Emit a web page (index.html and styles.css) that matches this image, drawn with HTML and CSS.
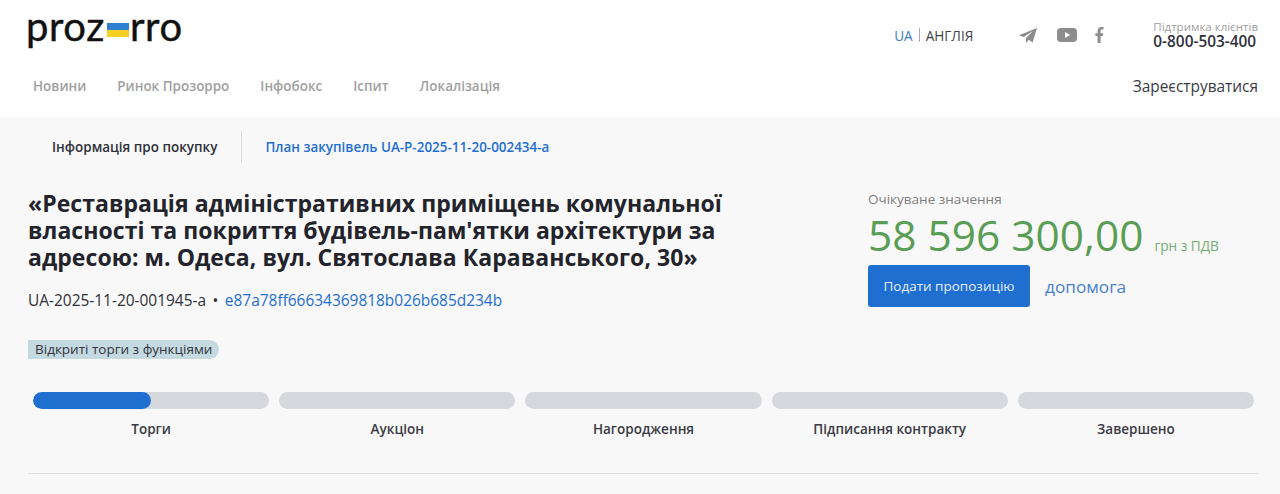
FILE: index.html
```html
<!DOCTYPE html>
<html lang="uk">
<head>
    <meta charset="UTF-8">
    <title>Prozorro</title>
    <link rel="stylesheet" href="styles.css">
</head>
<body>
    <header class="header">
        <div class="header-top">
            <a class="logo">proz<span class="logo-flag"></span>rro</a>
            <div class="header-right">
                <div class="lang"><span class="lang-active">UA</span><span class="lang-sep"></span><span>АНГЛІЯ</span></div>
                <div class="socials">
                    <svg class="icon-telegram" width="18" height="15" viewBox="0 0 18 15"><path d="M18 0 L0 7.2 L4.6 9 L14 3 L7 10 L7 15 L9.8 11.8 L13.6 14.6 Z" fill="#8c8c8c"/></svg>
                    <svg class="icon-youtube" width="20" height="14" viewBox="0 0 20 14"><rect width="20" height="14" rx="4" fill="#8c8c8c"/><path d="M8 4 L13.2 7 L8 10 Z" fill="#fff"/></svg>
                    <svg class="icon-facebook" width="9" height="16" viewBox="0 0 9 16"><path d="M2.6 16 V9 H0.4 V6.2 H2.6 V4 C2.6 1.4 4.1 0 6.3 0 C7.3 0 8.2 .1 8.5 .1 V2.6 H7 C5.8 2.6 5.6 3.2 5.6 4 V6.2 H8.3 L7.9 9 H5.6 V16 Z" fill="#8c8c8c"/></svg>
                </div>
                <div class="support">
                    <div class="support-label">Підтримка клієнтів</div>
                    <div class="support-phone">0-800-503-400</div>
                </div>
            </div>
        </div>
        <div class="header-nav">
            <nav class="nav">
                <a>Новини</a>
                <a>Ринок Прозорро</a>
                <a>Інфобокс</a>
                <a>Іспит</a>
                <a>Локалізація</a>
            </nav>
            <a class="register">Зареєструватися</a>
        </div>
    </header>

    <main class="main">
        <div class="tabs">
            <div class="tab tab-active">Інформація про покупку</div>
            <div class="tab tab-link">План закупівель UA-P-2025-11-20-002434-a</div>
        </div>

        <div class="tender">
            <div class="tender-info">
                <h1 class="tender-title">«Реставрація адміністративних приміщень комунальної власності та покриття будівель-пам'ятки архітектури за адресою: м. Одеса, вул. Святослава Караванського, 30»</h1>
                <div class="tender-ids">UA-2025-11-20-001945-a<span class="dot">•</span><a>e87a78ff66634369818b026b685d234b</a></div>
                <span class="tag">Відкриті торги з функціями</span>
            </div>
            <div class="tender-side">
                <div class="price-label">Очікуване значення</div>
                <div class="price"><span class="price-value">58 596 300,00</span><span class="price-tax">грн з ПДВ</span></div>
                <div class="actions">
                    <button class="submit-btn">Подати пропозицію</button>
                    <a class="help">допомога</a>
                </div>
            </div>
        </div>

        <div class="stages">
            <div class="stage">
                <div class="stage-bar"><div class="stage-fill"></div></div>
                <div class="stage-name">Торги</div>
            </div>
            <div class="stage">
                <div class="stage-bar"></div>
                <div class="stage-name">Аукціон</div>
            </div>
            <div class="stage">
                <div class="stage-bar"></div>
                <div class="stage-name">Нагородження</div>
            </div>
            <div class="stage">
                <div class="stage-bar"></div>
                <div class="stage-name">Підписання контракту</div>
            </div>
            <div class="stage">
                <div class="stage-bar"></div>
                <div class="stage-name">Завершено</div>
            </div>
        </div>
        <div class="divider"></div>
    </main>
</body>
</html>
```

FILE: styles.css
```css
body {
    margin: 0;
    height: 494px;
    overflow: hidden;
    font-family: "Open Sans", "Noto Sans", sans-serif;
    background-color: #f8f8f8;
    color: #2f3039;
}
.header {
    background-color: #fff;
    height: 117px;
    box-sizing: border-box;
    padding: 0 22px 0 28px;
}
.header-top {
    display: flex;
    justify-content: space-between;
    height: 66px;
}
.logo {
    font-family: "Lato", sans-serif;
    font-size: 40px;
    line-height: 30px;
    letter-spacing: 0.6px;
    color: #111;
    -webkit-text-stroke: 0.4px #111;
    margin-left: -2px;
    padding-top: 11px;
    display: flex;
    align-items: baseline;
    height: 30px;
}
.logo-flag {
    display: inline-block;
    width: 22px;
    height: 14px;
    margin: 0 1px 0 2px;
    background: linear-gradient(#2e7fd0 50%, #f7cf25 50%);
    transform: translateY(-4px);
}
.header-right {
    display: flex;
    align-items: center;
    height: 68px;
}
.lang {
    display: flex;
    align-items: center;
    font-size: 13.6px;
    color: #3d3f48;
    margin-right: 46px;
    padding-top: 2px;
}
.lang-active {
    color: #3b78c4;
}
.lang-sep {
    width: 1px;
    height: 14px;
    background-color: #aaa;
    margin: 0 6px;
}
.socials {
    display: flex;
    align-items: center;
    margin-right: 49px;
    padding-top: 2px;
}
.icon-telegram {
    margin-right: 20px;
}
.icon-youtube {
    margin-right: 18px;
}
.support-label {
    font-size: 11.5px;
    line-height: 14px;
    color: #a0a0a0;
}
.support-phone {
    font-size: 15.4px;
    font-weight: 600;
    line-height: 15px;
    color: #2f3039;
}
.header-nav {
    display: flex;
    justify-content: space-between;
    align-items: center;
    height: 40px;
}
.nav {
    display: flex;
    gap: 31px;
    padding-left: 5px;
    font-size: 13.45px;
    font-weight: 600;
    color: #9f9f9f;
}
.register {
    font-size: 15.4px;
    color: #3a3c45;
}
.main {
    padding: 0 22px 0 28px;
}
.tabs {
    display: flex;
    height: 32px;
    padding-top: 14px;
    font-size: 13.45px;
    font-weight: 600;
    align-items: center;
}
.tab {
    line-height: 32px;
}
.tab-active {
    padding: 0 24px;
    border-right: 1px solid #d5dde3;
}
.tab-link {
    padding-left: 23px;
    color: #1f6fd1;
}
.tender {
    display: flex;
    margin-top: 27px;
}
.tender-info {
    width: 840px;
}
.tender-title {
    margin: 0;
    width: 730px;
    font-size: 23px;
    line-height: 27px;
    font-weight: 700;
    letter-spacing: 0.05px;
    color: #22232b;
}
.tender-ids {
    margin-top: 18px;
    font-size: 15.45px;
    line-height: 22px;
}
.tender-ids a {
    color: #1f6fd1;
}
.dot {
    margin: 0 6.5px;
}
.tag {
    display: inline-block;
    margin-top: 29px;
    padding: 0 7px;
    font-size: 13.5px;
    line-height: 19px;
    background-color: #c5d9e1;
    border-radius: 0 10px 10px 0;
    color: #33343c;
}
.price-label {
    margin: -1px 0 1px;
    font-size: 13.5px;
    line-height: 20px;
    color: #808080;
}
.price {
    display: flex;
    align-items: baseline;
}
.price-value {
    font-size: 42.4px;
    line-height: 50px;
    color: #5a9e55;
}
.price-tax {
    margin-left: 11px;
    font-size: 13.6px;
    color: #76ad73;
}
.actions {
    display: flex;
    align-items: center;
    margin-top: 5px;
}
.submit-btn {
    width: 162px;
    height: 42px;
    border: none;
    border-radius: 3px;
    background-color: #1f6fd1;
    color: #e6eefa;
    font-family: inherit;
    font-size: 13.5px;
}
.help {
    margin-left: 15px;
    font-size: 17.2px;
    color: #4a80cb;
}
.stages {
    display: flex;
    gap: 10px;
    margin: 33px 4px 0 5px;
}
.stage {
    flex: 1;
    text-align: center;
}
.stage-bar {
    height: 17px;
    background-color: #d5d8dd;
    border-radius: 9px;
    overflow: hidden;
}
.stage-fill {
    width: 50%;
    height: 100%;
    background-color: #1f6fd1;
    border-radius: 9px;
}
.stage-name {
    margin-top: 10px;
    font-size: 13.5px;
    line-height: 20px;
    font-weight: 600;
    color: #3a3b44;
}
.divider {
    margin-top: 34px;
    height: 1px;
    background-color: #e0e0e0;
}
```
